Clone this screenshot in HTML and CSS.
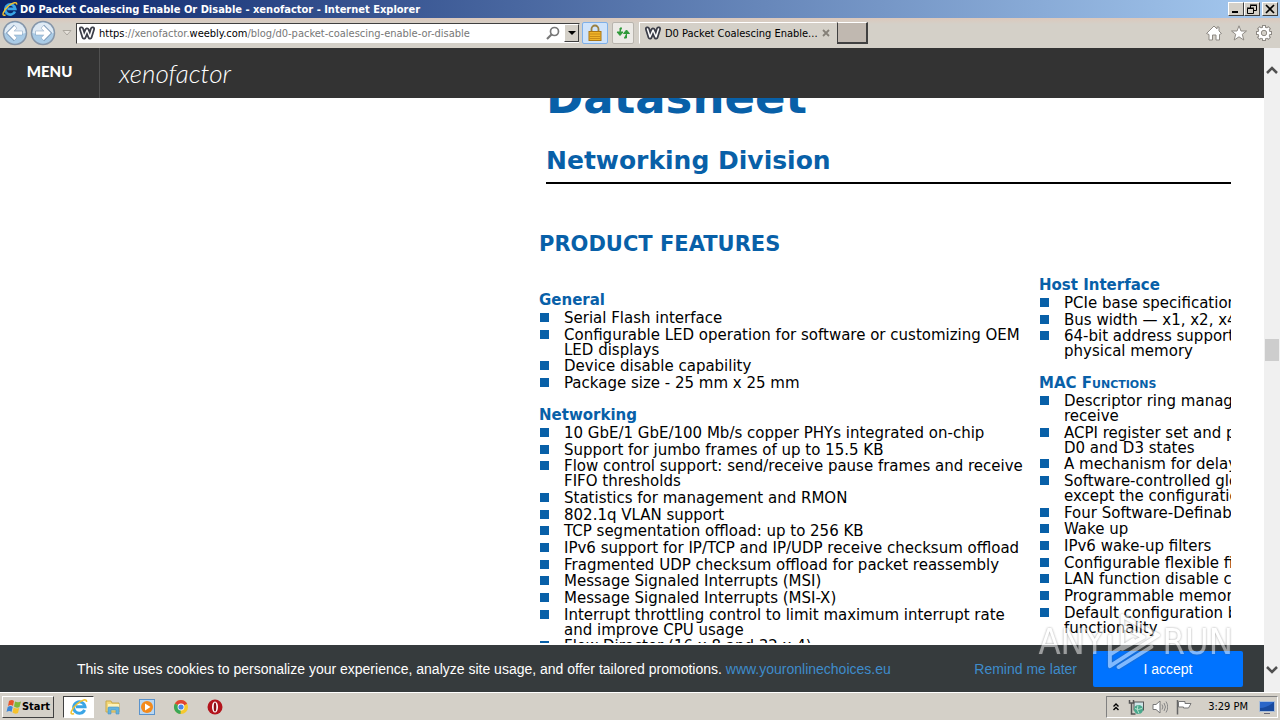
FILE: index.html
```html
<!DOCTYPE html>
<html lang="en">
<head>
<meta charset="utf-8">
<title>D0 Packet Coalescing Enable Or Disable - xenofactor</title>
<link rel="stylesheet" href="styles.css">
</head>
<body class="desktop">
<svg class="defs" aria-hidden="true">
  <symbol id="ie" viewBox="0 0 18 18">
    <path d="M14.6 11.8A5.7 5.7 0 1 1 15 8.8H6" fill="none" stroke="#3aa5e6" stroke-width="3"/>
    <path d="M4 15.500C-1 18 1 11 7 6C12 1.500 17 .5 16.500 4" fill="none" stroke="#f2c230" stroke-width="1.600"/>
  </symbol>
  <symbol id="weebly" viewBox="0 0 16 14">
    <path d="M2.500 3L5 11L8 4L11 11L13.500 3" fill="none" stroke="#3b3d48" stroke-width="5" stroke-linejoin="round" stroke-linecap="round"/>
    <path d="M2.500 3L5 11L8 4L11 11L13.500 3" fill="none" stroke="#fff" stroke-width="1.500" stroke-linejoin="round" stroke-linecap="round"/>
  </symbol>
</svg>

<header class="titlebar">
  <svg class="icon16"><use href="#ie"/></svg>
  <span class="window-title">D0 Packet Coalescing Enable Or Disable - xenofactor - Internet Explorer</span>
  <div class="window-buttons">
    <button class="win-btn" aria-label="Minimize"><svg viewBox="0 0 12 10"><path d="M2 8h6" stroke="#000" stroke-width="2"/></svg></button>
    <button class="win-btn" aria-label="Restore"><svg viewBox="0 0 12 10"><path d="M4.500 4V1.500H10.500V6.500H8M4 1h7M1.500 4.500H7.500V9.500H1.500ZM1 4h7" fill="none" stroke="#000"/></svg></button>
    <button class="win-btn win-close" aria-label="Close"><svg viewBox="0 0 12 10"><path d="M2 1l8 8M10 1l-8 8" stroke="#000" stroke-width="1.700"/></svg></button>
  </div>
</header>

<nav class="toolbar" aria-label="Browser">
  <button class="nav-btn" aria-label="Back"><svg viewBox="0 0 26 26"><circle cx="13" cy="13" r="11.500" fill="#a9cbe6" stroke="#8796a8" stroke-width="1.500"/><path d="M2.500 13a10.500 10.500 0 0 1 21 0q-10 3-21 0" fill="#dfeaf4"/><path d="M20.500 13H8M13.500 6.500L7 13L13.500 19.500" fill="none" stroke="#7f9cba" stroke-width="4.600"/><path d="M20 13H8M13.500 7L7.500 13L13.500 19" fill="none" stroke="#fff" stroke-width="3.400"/></svg></button>
  <button class="nav-btn" aria-label="Forward"><svg viewBox="0 0 26 26"><circle cx="13" cy="13" r="11.500" fill="#a9cbe6" stroke="#8796a8" stroke-width="1.500"/><path d="M2.500 13a10.500 10.500 0 0 1 21 0q-10 3-21 0" fill="#dfeaf4"/><path d="M5.500 13H18M12.500 6.500L19 13L12.500 19.500" fill="none" stroke="#7f9cba" stroke-width="4.600"/><path d="M6 13H18M12.500 7L18.500 13L12.500 19" fill="none" stroke="#fff" stroke-width="3.400"/></svg></button>
  <button class="history-btn" aria-label="Recent pages"><svg viewBox="0 0 10 6"><path d="M1 .5h8L5 5Z" fill="#e6e2db" stroke="#aaa69e"/></svg></button>
  <div class="address">
    <svg class="favicon"><use href="#weebly"/></svg>
    <span class="url"><b>https</b>://xenofactor.<b>weebly.com</b>/blog/d0-packet-coalescing-enable-or-disable</span>
    <button class="plain" aria-label="Search"><svg class="icon14" viewBox="0 0 14 14"><circle cx="8.500" cy="5.500" r="4" fill="none" stroke="#777" stroke-width="1.700"/><path d="M5.500 8.500L1 13" stroke="#777" stroke-width="2.200"/></svg></button>
    <button class="drop-btn" aria-label="Show addresses"><svg viewBox="0 0 8 4"><path d="M0 0h8L4 4Z"/></svg></button>
  </div>
  <button class="tool-btn lock" aria-label="Security report"><svg class="icon18" viewBox="0 0 18 18"><path d="M5.500 8V5a3.500 3.500 0 0 1 7 0v3" fill="none" stroke="#9a8040" stroke-width="1.800"/><rect x="3" y="7.500" width="12" height="9" fill="#f0b429" stroke="#a97616"/><path d="M3.500 10h11M3.500 12.500h11M3.500 14.500h11" stroke="#c98c18"/></svg></button>
  <button class="tool-btn" aria-label="Refresh"><svg class="icon14" viewBox="0 0 14 14"><path d="M6 2H4V7M1 6h6L4 9.500ZM8 12h2.500V7M7.500 7.500h6L10.500 4Z" fill="#2f9a3a" stroke="#2f9a3a"/></svg></button>
  <div class="tab">
    <svg class="favicon"><use href="#weebly"/></svg>
    <span class="tab-title">D0 Packet Coalescing Enable...</span>
    <button class="plain" aria-label="Close tab"><svg class="icon8" viewBox="0 0 8 8"><path d="M1 1l6 6M7 1L1 7" stroke="#858078" stroke-width="1.800"/></svg></button>
  </div>
  <button class="new-tab" aria-label="New tab"></button>
  <div class="tools">
    <button class="plain" aria-label="Home"><svg class="icon16" viewBox="0 0 16 16"><path d="M8 1L11 4V2H13V6L15.500 8.500L13.500 9.500V15H10V10H6.500V15H3V9.500L.5 8.500Z" fill="#fff" stroke="#8e8a84"/></svg></button>
    <button class="plain" aria-label="Favorites"><svg class="icon16" viewBox="0 0 16 16"><path d="M8 .8L10 6H15.500L11.300 9.300L12.800 15L8 11.800L3.200 15L4.700 9.300L.5 6H6Z" fill="#fff" stroke="#8e8a84"/></svg></button>
    <button class="plain" aria-label="Tools"><svg class="icon16" viewBox="0 0 16 16"><g fill="none"><path d="M8 0v16M0 8h16M2.300 2.300l11.400 11.400M13.700 2.300L2.300 13.700" stroke="#8e8a84" stroke-width="4"/><circle cx="8" cy="8" r="4.500" stroke="#8e8a84" stroke-width="4"/><path d="M8 1v14M1 8h14M3 3l10 10M13 3L3 13" stroke="#fff" stroke-width="2"/><circle cx="8" cy="8" r="4.300" stroke="#fff" stroke-width="2.600"/></g><circle cx="8" cy="8" r="2.700" fill="#d4d0c8" stroke="#8e8a84"/></svg></button>
  </div>
</nav>

<div class="viewport">
  <div class="page">
    <header class="site-header">
      <button class="menu">MENU</button>
      <a class="site-name" href="#">xenofactor</a>
    </header>
    <main class="datasheet">
      <div class="sheet-head">
        <h1>Datasheet</h1>
        <p class="division">Networking Division</p>
      </div>
      <h2>PRODUCT FEATURES</h2>
      <div class="columns">
        <div class="column column-left">
          <h3>General</h3>
          <ul>
            <li>Serial Flash interface</li>
            <li>Configurable LED operation for software or customizing OEM<br>LED displays</li>
            <li>Device disable capability</li>
            <li>Package size - 25 mm x 25 mm</li>
          </ul>
          <h3>Networking</h3>
          <ul>
            <li>10 GbE/1 GbE/100 Mb/s copper PHYs integrated on-chip</li>
            <li>Support for jumbo frames of up to 15.5 KB</li>
            <li>Flow control support: send/receive pause frames and receive<br>FIFO thresholds</li>
            <li>Statistics for management and RMON</li>
            <li>802.1q VLAN support</li>
            <li>TCP segmentation offload: up to 256 KB</li>
            <li>IPv6 support for IP/TCP and IP/UDP receive checksum offload</li>
            <li>Fragmented UDP checksum offload for packet reassembly</li>
            <li>Message Signaled Interrupts (MSI)</li>
            <li>Message Signaled Interrupts (MSI-X)</li>
            <li>Interrupt throttling control to limit maximum interrupt rate<br>and improve CPU usage</li>
            <li>Flow Director (16 x 8 and 32 x 4)</li>
          </ul>
        </div>
        <div class="column">
          <h3>Host Interface</h3>
          <ul>
            <li>PCIe base specification 2.1</li>
            <li>Bus width — x1, x2, x4, x8</li>
            <li>64-bit address support for<br>physical memory</li>
          </ul>
          <h3 class="small-caps">MAC Functions</h3>
          <ul>
            <li>Descriptor ring management<br>receive</li>
            <li>ACPI register set and power down<br>D0 and D3 states</li>
            <li>A mechanism for delaying</li>
            <li>Software-controlled global reset<br>except the configuration</li>
            <li>Four Software-Definable Pins</li>
            <li>Wake up</li>
            <li>IPv6 wake-up filters</li>
            <li>Configurable flexible filter</li>
            <li>LAN function disable capability</li>
            <li>Programmable memory</li>
            <li>Default configuration by<br>functionality</li>
          </ul>
        </div>
      </div>
    </main>
    <section class="cookies" aria-label="Cookies">
      <p>This site uses cookies to personalize your experience, analyze site usage, and offer tailored promotions. <a href="#">www.youronlinechoices.eu</a></p>
      <a class="later" href="#">Remind me later</a>
      <button class="accept">I accept</button>
    </section>
    <div class="watermark">
      <span>ANY</span>
      <svg viewBox="0 0 56 60"><path d="M16 3v34M16 3L53 23L3 55V24M16 14L38 25L16 37M3 43L27 28M12 56L46 35" fill="none" stroke="#fff" stroke-width="4" stroke-linejoin="round" stroke-linecap="round"/></svg>
      <span>RUN</span>
    </div>
  </div>
  <div class="scrollbar">
    <button class="scroll-btn" aria-label="Scroll up"><svg viewBox="0 0 12 8"><path d="M1 7L6 2L11 7" fill="none" stroke="#505050" stroke-width="2.500"/></svg></button>
    <div class="track"><div class="thumb"></div></div>
    <button class="scroll-btn" aria-label="Scroll down"><svg viewBox="0 0 12 8"><path d="M1 1L6 6L11 1" fill="none" stroke="#505050" stroke-width="2.500"/></svg></button>
  </div>
</div>

<footer class="taskbar">
  <button class="start"><svg class="icon16" viewBox="0 0 16 16"><path d="M3 2q3-2 5 0L7 7Q5 5 2 7Z" fill="#e8562a"/><path d="M9 2.500q3 1.500 6 0L13.500 8q-3 1.500-5.500-.5Z" fill="#7fb83a"/><path d="M1.700 8q3-2 5 0L5.500 13Q3.500 11 .5 13Z" fill="#3b86d8"/><path d="M7.700 8.500q3 1.500 5.500.5L12 14q-3 1.500-5.500-.5Z" fill="#f6c22c"/></svg>Start</button>
  <button class="task active" aria-label="Internet Explorer"><svg class="icon18"><use href="#ie"/></svg></button>
  <button class="task" aria-label="Explorer"><svg class="icon16" viewBox="0 0 16 16"><path d="M1 2h5l1 2h7v9H1Z" fill="#f3d778" stroke="#c9a94a"/><path d="M3 5h11v3H3Z" fill="#fff3b8"/><path d="M3 15V9q0-1 1-1h9q1 0 1 1v6h-3v-4H6v4Z" fill="#63b3dd" stroke="#4a93c4" stroke-width=".6"/></svg></button>
  <button class="task" aria-label="Media Player"><svg class="icon16" viewBox="0 0 16 16"><rect x=".5" y=".5" width="15" height="15" fill="#b9d7f2" stroke="#5a93cc"/><circle cx="8" cy="8" r="6" fill="#f38a1c"/><path d="M6 4.500L11.500 8L6 11.500Z" fill="#fff"/></svg></button>
  <button class="task" aria-label="Chrome"><svg class="icon16" viewBox="0 0 16 16"><circle cx="8" cy="8" r="7" fill="#f6c92e"/><path d="M8 8L1.900 4.500A7 7 0 0 1 14.100 4.800Z" fill="#e04434"/><path d="M8 8L1.900 4.500A7 7 0 0 0 7.500 15Z" fill="#3ba757"/><circle cx="8" cy="8" r="3.400" fill="#fff"/><circle cx="8" cy="8" r="2.600" fill="#4a86e8"/></svg></button>
  <button class="task" aria-label="Opera"><svg class="icon16" viewBox="0 0 16 16"><circle cx="8" cy="8" r="7.500" fill="#b3141c"/><ellipse cx="8" cy="8" rx="3" ry="5.500" fill="#fff"/><ellipse cx="8" cy="8" rx="1.300" ry="4.500" fill="#8a0e14"/></svg></button>
  <div class="tray">
    <svg class="icon8" viewBox="0 0 8 8"><path d="M1.500 3.500L4 1L6.500 3.500M1.500 7L4 4.500L6.500 7" fill="none" stroke="#000" stroke-width="1.400"/></svg>
    <svg class="icon16" viewBox="0 0 16 16"><rect x="6" y="3" width="9.500" height="8" fill="#cfe5e8" stroke="#555"/><path d="M1.500 1v3h4V1M3.500 4v11h4" fill="none" stroke="#555" stroke-width="1.500"/><circle cx="10.500" cy="10.500" r="4.500" fill="#4aa88c"/><path d="M7 9.500q3 2 7 0M10 6.500q-2 4 1 8" fill="none" stroke="#b8e4d0"/></svg>
    <svg class="icon16" viewBox="0 0 16 16"><path d="M1 5.500h3L8 2v12L4 10.500H1Z" fill="#fff" stroke="#777"/><path d="M10 5.500q1.800 2.500 0 5M12 4q3 4 0 8M14 2.500q3.500 5.500 0 11" fill="none" stroke="#888"/></svg>
    <svg class="icon16" viewBox="0 0 16 16"><path d="M1.500 1v14.500" stroke="#666" stroke-width="1.500"/><path d="M2.500 2.500H9V4.500H15L12.500 9H7.500V8H2.500Z" fill="#fff" stroke="#777"/></svg>
    <time>3:29 PM</time>
    <svg class="icon16" viewBox="0 0 16 16"><rect x=".5" y="2.500" width="15" height="10" fill="#2a66c8" stroke="#a9bdd8"/><path d="M1 9q7 0 14-6v9H1Z" fill="#184a9e"/><path d="M5 14.500h6" stroke="#667"/></svg>
  </div>
</footer>
</body>
</html>
```
FILE: styles.css
```css
* { box-sizing: border-box; }

.desktop {
  margin: 0;
  height: 100vh;
  display: flex;
  flex-direction: column;
  overflow: hidden;
  background: #d4d0c8;
  font-family: "DejaVu Sans Condensed", "DejaVu Sans", sans-serif;
  font-size: 11px;
  color: #000;
}

button { font: inherit; color: inherit; padding: 0; border: 0; background: none; }
a { text-decoration: none; }
svg { display: block; flex: none; }
.defs { position: absolute; width: 0; height: 0; }
.icon8 { width: 8px; height: 8px; }
.icon14 { width: 14px; height: 14px; }
.icon16 { width: 16px; height: 16px; }
.icon18 { width: 18px; height: 18px; }
.plain { display: flex; }

/* Window title */
.titlebar {
  flex: none;
  height: 18px;
  display: flex;
  align-items: center;
  gap: 2px;
  padding: 0 2px;
  background: linear-gradient(to right, #0a246a, #a6caf0);
  color: #fff;
  font-weight: bold;
  white-space: nowrap;
}
.window-title { flex: 1; }
.window-buttons { display: flex; }
.win-btn {
  width: 16px;
  height: 14px;
  display: grid;
  place-items: center;
  background: #d4d0c8;
  border: 1px solid;
  border-color: #fff #404040 #404040 #fff;
}
.win-btn svg { width: 12px; height: 10px; }
.win-close { margin-left: 2px; }

/* Browser toolbar */
.toolbar {
  flex: none;
  height: 30px;
  display: flex;
  align-items: center;
  padding: 0 8px 0 2px;
  background: linear-gradient(#dcc8bc, #d4d0c8 6px);
}
.nav-btn { width: 28px; }
.nav-btn svg { width: 26px; height: 26px; }
.history-btn { width: 18px; display: grid; place-items: center; }
.history-btn svg { width: 10px; height: 6px; }
.address {
  width: 504px;
  height: 21px;
  display: flex;
  align-items: center;
  gap: 4px;
  padding-left: 2px;
  background: #fff;
  border: 1px solid;
  border-color: #404040 #d4d0c8 #d4d0c8 #404040;
}
.favicon { width: 16px; height: 14px; }
.url { flex: 1; color: #777; white-space: nowrap; }
.url b { font-weight: normal; color: #000; }
.drop-btn {
  width: 15px;
  height: 18px;
  display: grid;
  place-items: center;
  background: #d4d0c8;
  border: 1px solid;
  border-color: #fff #404040 #404040 #fff;
}
.drop-btn svg { width: 8px; height: 4px; }
.tool-btn {
  width: 22px;
  height: 22px;
  margin-left: 4px;
  display: grid;
  place-items: center;
  background: #eceae6;
  border: 1px solid #b9b5ae;
  border-radius: 2px;
}
.tool-btn.lock { width: 26px; margin-left: 2px; background: #cfe3fa; border-color: #7fb0e8; }
.tab {
  width: 198px;
  height: 22px;
  margin-left: 5px;
  display: flex;
  align-items: center;
  gap: 4px;
  padding: 0 6px 0 5px;
  border: 1px solid;
  border-color: #fff transparent transparent #fff;
}
.tab-title { flex: 1; white-space: nowrap; }
.new-tab {
  width: 31px;
  height: 22px;
  background: #c0b8b0;
  border: solid;
  border-width: 1px 2px 2px 1px;
  border-color: #fff #404040 #404040 #404040;
}
.tools { margin-left: auto; display: flex; gap: 9px; }

/* Page viewport */
.viewport { flex: 1; min-height: 0; display: flex; background: #fff; }
.page { position: relative; flex: 1; min-width: 0; display: flex; flex-direction: column; }
.site-header {
  flex: none;
  height: 50px;
  display: flex;
  align-items: center;
  background: #333;
  color: #fff;
}
.menu {
  width: 100px;
  height: 50px;
  padding-bottom: 4px;
  border-right: 1px solid #505050;
  font: 900 15px/20px Lato, sans-serif;
}
.site-name { padding-left: 19px; color: #fff; font: italic 300 26px/28px Lato, sans-serif; }

/* Datasheet */
.datasheet {
  flex: 1;
  min-height: 0;
  overflow: hidden;
  margin: 0 33px 2px 0;
  padding-left: 539px;
  font: 15px/15px "DejaVu Sans", sans-serif;
  white-space: nowrap;
}
.sheet-head {
  margin: -24px 0 0 7px;
  padding-bottom: 6px;
  border-bottom: 2px solid #000;
  color: #0860a8;
}
h1, h2, h3, ul, p { margin: 0; }
h1 { font-size: 45px; line-height: 48px; }
.division { margin-top: 24px; font-size: 25px; line-height: 30px; font-weight: bold; }
h2 { margin: 48px 0 20px; font-size: 21px; line-height: 24px; color: #0860a8; }
.columns { display: grid; grid-template-columns: 500px minmax(0, 1fr); }
.column-left { padding-top: 15px; }
h3 { margin-bottom: 2px; font-size: 15px; line-height: 18px; color: #0860a8; }
ul + h3 { margin-top: 15px; }
.small-caps { font-variant: small-caps; }
ul { padding: 0; list-style: none; }
li { padding-left: 25px; background: linear-gradient(#0860a8, #0860a8) 1px 2px / 9px 9px no-repeat; }
li + li { margin-top: 2px; }
li:nth-child(3n) { margin-top: 1px; }

/* Cookie notice */
.cookies {
  flex: none;
  display: flex;
  align-items: center;
  height: 47px;
  padding: 0 21px 0 77px;
  background: #363b3d;
  color: #fff;
  font: 14px/16px "Liberation Sans", sans-serif;
}
.cookies p { flex: 1; }
.cookies a { color: #3e8ccb; }
.accept { width: 150px; height: 36px; margin-left: 16px; background: #0073ff; border-radius: 2px; }
.watermark {
  position: absolute;
  right: 31px;
  bottom: 20px;
  display: flex;
  align-items: center;
  gap: 2px;
  color: #fff;
  opacity: .5;
  font: 36px/60px "DejaVu Sans Condensed", "DejaVu Sans", sans-serif;
  filter: drop-shadow(0 0 1px #555);
  pointer-events: none;
}
.watermark svg { width: 54px; height: 60px; }

/* Scrollbar */
.scrollbar { width: 16px; display: flex; flex-direction: column; background: #f0f0f0; }
.scroll-btn { height: 44px; display: grid; place-items: center; }
.scroll-btn svg { width: 12px; height: 8px; }
.track { flex: 1; display: flex; flex-direction: column; }
.thumb { height: 22px; margin: 247px 1px 0; background: #cdcdcd; }

/* Taskbar */
.taskbar {
  flex: none;
  height: 28px;
  display: flex;
  align-items: center;
  padding: 0 2px;
  border-top: 1px solid #fff;
  background: #d4d0c8;
}
.start {
  width: 52px;
  height: 22px;
  margin-right: 9px;
  display: flex;
  align-items: center;
  justify-content: center;
  border: 1px solid;
  border-color: #fff #404040 #404040 #fff;
  font-weight: bold;
}
.task { width: 31px; height: 22px; margin-right: 3px; display: grid; place-items: center; }
.task.active { background: #fff; border: 1px solid; border-color: #404040 #fff #fff #404040; }
.tray {
  height: 22px;
  margin-left: auto;
  display: flex;
  align-items: center;
  gap: 8px;
  padding: 0 2px 0 5px;
  border: 1px solid;
  border-color: #808080 #fff #fff #808080;
}
.tray time { margin: 0 3px 0 8px; }
```
